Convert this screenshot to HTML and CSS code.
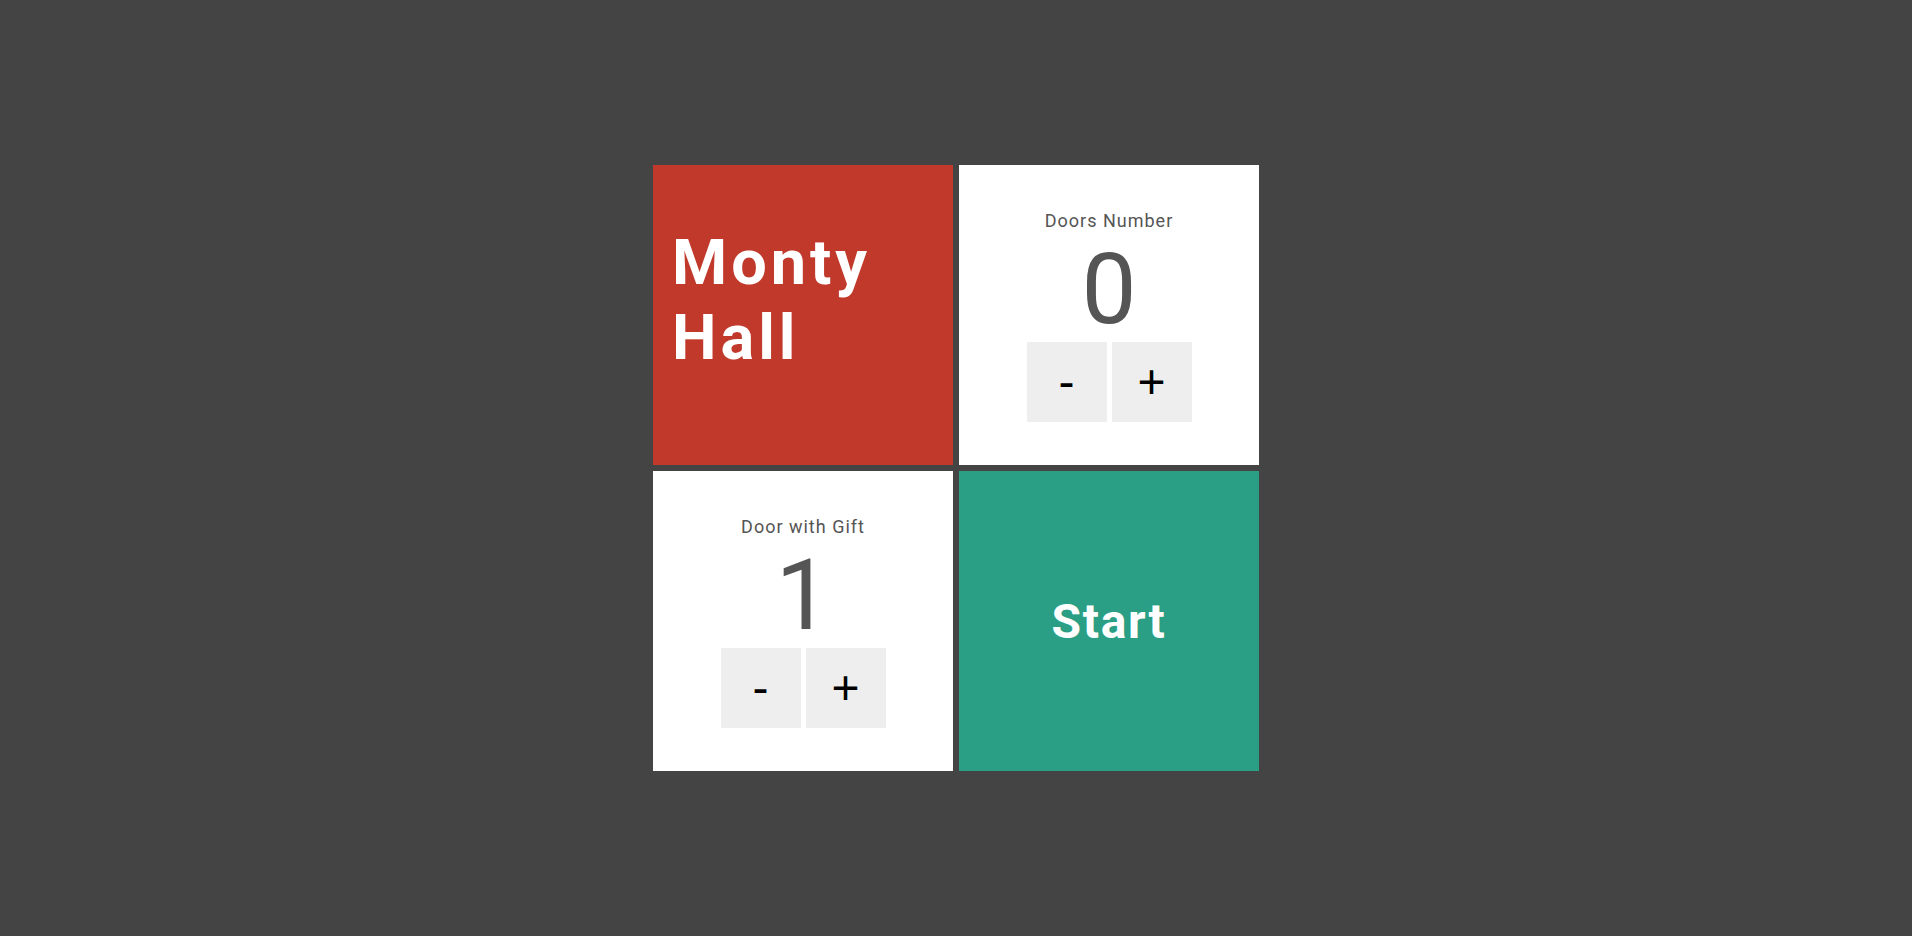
FILE: index.html
```html
<!DOCTYPE html>
<html lang="en">
<head>
<meta charset="utf-8">
<title>Monty Hall</title>
<link rel="stylesheet" href="styles.css">
</head>
<body>
<main class="board">
  <section class="tile tile-title">
    <h1 class="title">Monty<br>Hall</h1>
  </section>
  <section class="tile tile-counter">
    <div class="label">Doors Number</div>
    <div class="value">0</div>
    <div class="controls">
      <button class="btn" type="button">-</button>
      <button class="btn" type="button">+</button>
    </div>
  </section>
  <section class="tile tile-counter">
    <div class="label">Door with Gift</div>
    <div class="value">1</div>
    <div class="controls">
      <button class="btn" type="button">-</button>
      <button class="btn" type="button">+</button>
    </div>
  </section>
  <section class="tile tile-start">
    <span class="start">Start</span>
  </section>
</main>
</body>
</html>
```

FILE: styles.css
```css
html, body {
  margin: 0;
  padding: 0;
}

body {
  background: #444444;
  min-height: 100vh;
  display: flex;
  align-items: center;
  justify-content: center;
  font-family: Roboto, "Open Sans", sans-serif;
}

.board {
  display: grid;
  grid-template-columns: 300px 300px;
  grid-template-rows: 300px 300px;
  gap: 6px;
}

.tile {
  box-sizing: border-box;
  width: 300px;
  height: 300px;
}

.tile-title {
  background: #c0392b;
  padding: 60px 19px 0;
}

.title {
  margin: 0;
  color: #ffffff;
  font-size: 63px;
  font-weight: 700;
  line-height: 75px;
  letter-spacing: 4px;
}

.tile-counter {
  background: #ffffff;
  display: flex;
  flex-direction: column;
  align-items: center;
  padding-top: 44px;
  color: #555555;
}

.label {
  font-size: 18px;
  line-height: 24px;
  letter-spacing: 1px;
}

.value {
  font-size: 98px;
  line-height: 98px;
  margin-top: 8px;
}

.controls {
  display: flex;
  gap: 5px;
  margin-top: 3px;
}

.btn {
  width: 80px;
  height: 80px;
  border: 0;
  padding: 0;
  background: #eeeeee;
  color: #000000;
  font-family: "Liberation Sans", Arial, sans-serif;
  font-size: 48px;
  line-height: 80px;
  cursor: pointer;
}

.tile-start {
  background: #2a9f85;
  display: flex;
  align-items: center;
  justify-content: center;
}

.start {
  color: #ffffff;
  font-size: 48px;
  font-weight: 700;
  letter-spacing: 1.75px;
}
```
